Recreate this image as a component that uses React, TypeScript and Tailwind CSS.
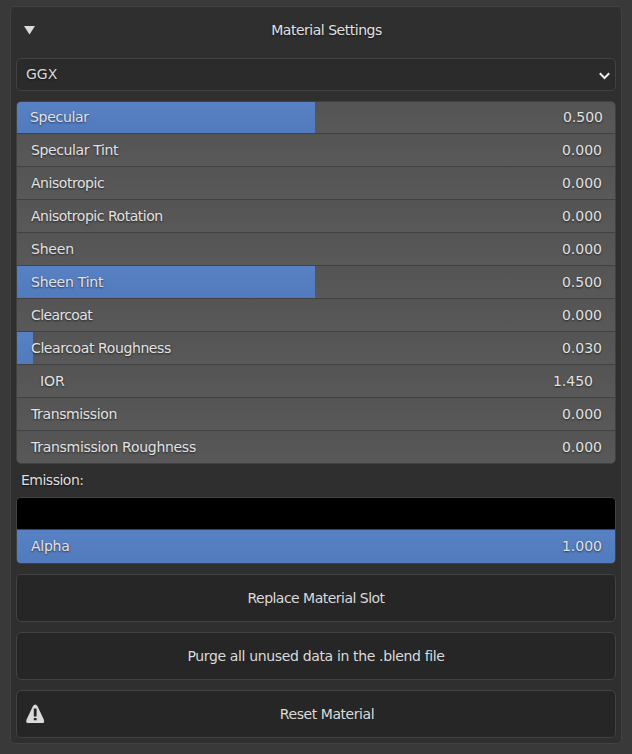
type Field = { label: string; value: string; tracking: string; fill?: string; pad?: string; height?: string };

const fields: Field[] = [
  { label: "Specular", value: "0.500", tracking: "tracking-[-0.3px]", fill: "w-[298px]", pad: "pl-[13px] pr-3 pb-px", height: "h-8" },
  { label: "Specular Tint", value: "0.000", tracking: "tracking-[-0.38px]" },
  { label: "Anisotropic", value: "0.000", tracking: "tracking-[-0.46px]" },
  { label: "Anisotropic Rotation", value: "0.000", tracking: "tracking-[-0.47px]" },
  { label: "Sheen", value: "0.000", tracking: "tracking-[-0.2px]" },
  { label: "Sheen Tint", value: "0.500", tracking: "tracking-[-0.25px]", fill: "w-[298px]" },
  { label: "Clearcoat", value: "0.000", tracking: "tracking-[-0.62px]" },
  { label: "Clearcoat Roughness", value: "0.030", tracking: "tracking-[-0.4px]", fill: "w-4" },
  { label: "IOR", value: "1.450", tracking: "tracking-[-0.1px]", pad: "pl-[23px] pr-[22px]" },
  { label: "Transmission", value: "0.000", tracking: "tracking-[-0.38px]" },
  { label: "Transmission Roughness", value: "0.000", tracking: "tracking-[-0.29px]", height: "h-8" },
];

const alpha: Field = {
  label: "Alpha",
  value: "1.000",
  tracking: "tracking-[-0.25px]",
  fill: "w-full",
  pad: "pl-3.5 pr-[13px] pb-0.5",
};

function FieldRow({ field, last }: { field: Field; last?: boolean }) {
  return (
    <div
      className={`relative bg-linear-to-b from-[#545454] to-[#595959] ${field.height ?? "h-[33px]"} ${last ? "" : "border-b border-[#414141]"}`}
    >
      {field.fill && (
        <div className={`absolute inset-y-0 left-0 bg-linear-to-b from-[#5881c4] to-[#527bbe] ${field.fill}`} />
      )}
      <div
        className={`relative flex h-full items-center justify-between text-[#e2e2e2] ${field.pad ?? "pl-3.5 pr-[13px]"}`}
      >
        <span className={field.tracking}>{field.label}</span>
        <span>{field.value}</span>
      </div>
    </div>
  );
}

function ActionButton({ label, tracking, warning }: { label: string; tracking: string; warning?: boolean }) {
  return (
    <button
      className={`relative mt-2.5 flex h-12 w-full shrink-0 items-center justify-center rounded-[5px] border border-[#424242] bg-[#262626] text-[#dadada] ${warning ? "pl-[22px]" : ""}`}
    >
      {warning && (
        <svg className="absolute left-[9px] top-[13px]" width="19" height="20" viewBox="0 0 19 20">
          <path d="M7 2Q9.2-1.2 11.4 2L17.8 15.5Q18.8 19 17 19H1.4Q-.4 19 .6 15.5Z" fill="#dadada" />
          <path d="M7.8 4.5h2.8v8H7.8zM7.8 14h2.8v2.3H7.8z" fill="#262626" />
        </svg>
      )}
      <span className={tracking}>{label}</span>
    </button>
  );
}

export default function App() {
  return (
    <main className="h-[754px] w-[632px] bg-[#393939] pl-2.5 pt-1.5 font-['DejaVu_Sans',sans-serif] text-[14px] leading-[18px] [text-shadow:0_1px_2px_#0009]">
      <section className="flex h-[738px] w-[612px] flex-col rounded-[5px] border border-[#424242] bg-[#2f2f2f] px-[5px]">
        <header className="relative flex h-[51px] shrink-0 items-center justify-center pb-1.5 pl-[21px] text-[#e0e0e0]">
          <svg className="absolute left-2 top-[19px]" width="11" height="9" viewBox="0 0 11 9">
            <path d="M0 0H11L5.5 8.5Z" fill="#dadada" />
          </svg>
          <span className="tracking-[-0.48px]">Material Settings</span>
        </header>

        <div className="flex h-[33px] shrink-0 items-center justify-between rounded-[5px] border border-[#424242] bg-[#2b2b2b] pl-[9px] pr-[5px] text-[#d9d9d9]">
          <span className="pb-0.5">GGX</span>
          <svg className="mt-0.5" width="11" height="8" viewBox="0 0 11 8">
            <path d="M.8 1.2L5.5 6L10.2 1.2" fill="none" stroke="#ececec" strokeWidth="2" />
          </svg>
        </div>

        <div className="mt-2.5 shrink-0 overflow-hidden rounded-[5px] border border-[#414141]">
          {fields.map((field, i) => (
            <FieldRow key={field.label} field={field} last={i === fields.length - 1} />
          ))}
        </div>

        <div className="flex h-[33px] shrink-0 items-center pb-0.5 pl-[5px] text-[#dedede]">
          <span className="tracking-[-0.5px]">Emission:</span>
        </div>

        <div className="h-[67px] shrink-0 overflow-hidden rounded-[5px] border border-[#414141]">
          <div className="h-8 border-b border-[#414141] bg-black" />
          <FieldRow field={alpha} last />
        </div>

        <ActionButton label="Replace Material Slot" tracking="tracking-[-0.52px]" />
        <ActionButton label="Purge all unused data in the .blend file" tracking="tracking-[-0.35px]" />
        <ActionButton label="Reset Material" tracking="tracking-[-0.44px]" warning />
      </section>
    </main>
  );
}
